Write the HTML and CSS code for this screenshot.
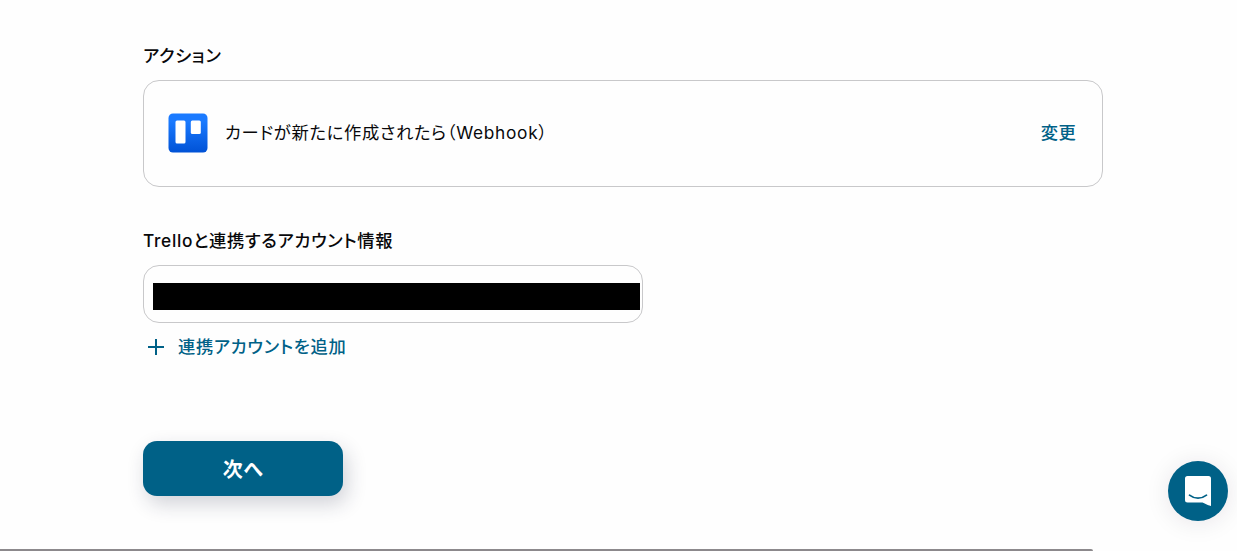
FILE: index.html
```html
<!DOCTYPE html>
<html lang="ja">
<head>
    <meta charset="UTF-8">
    <meta name="viewport" content="width=device-width, initial-scale=1.0">
    <title>アクション設定</title>
    <link rel="stylesheet" href="styles.css">
</head>
<body>
    <main class="content">
        <h2 class="label">アクション</h2>
        <div class="action-card">
            <svg class="app-icon" viewBox="0 0 40 40">
                <defs>
                    <linearGradient id="trello" x1="0" y1="0" x2="0" y2="1">
                        <stop offset="0.2" stop-color="#1a7aff"/>
                        <stop offset="1" stop-color="#0052d6"/>
                    </linearGradient>
                </defs>
                <rect x="0.500" y="0.500" width="39" height="39" rx="4.5" fill="url(#trello)"/>
                <rect x="7.5" y="7.5" width="10" height="23" rx="1.5" fill="#fff"/>
                <rect x="22.8" y="7.5" width="10" height="13.5" rx="1.5" fill="#fff"/>
            </svg>
            <span class="action-name">カードが新たに作成されたら（Webhook）</span>
            <a class="change-link">変更</a>
        </div>

        <h2 class="label">Trelloと連携するアカウント情報</h2>
        <div class="account-select">
            <div class="masked"></div>
        </div>
        <a class="add-account">
            <svg class="plus-icon" viewBox="0 0 16 16">
                <path d="M8 0v16M0 8h16" stroke="currentColor" stroke-width="2"/>
            </svg>
            <span class="add-text">連携アカウントを追加</span>
        </a>

        <button class="next-btn">次へ</button>
    </main>

    <!-- チャットボタン -->
    <div class="chat-launcher">
        <svg class="chat-icon" viewBox="0 0 28 32">
            <path d="M3.500 1h21a2.500 2.500 0 0 1 2.500 2.500V31s-4-1-8.500-3.500h-15A2.500 2.500 0 0 1 1 25V3.500A2.500 2.500 0 0 1 3.500 1z" fill="#fff"/>
            <path d="M5.500 20.200c5 4 12 4 17 0" fill="none" stroke="#006187" stroke-width="1.700" stroke-linecap="round"/>
        </svg>
    </div>
    <div class="bottom-bar"></div>
</body>
</html>
```

FILE: styles.css
```css
* {
    box-sizing: border-box;
}
body {
    margin: 0;
    height: 551px;
    overflow: hidden;
    background-color: #fefefe;
    color: #08080a;
    font-family: Inter, "Noto Sans CJK JP", sans-serif;
    font-size: 17.3px;
    letter-spacing: 0.7px;
    font-feature-settings: "palt";
}
.content {
    display: flex;
    flex-direction: column;
    align-items: flex-start;
    width: 960px;
    margin-left: 143px;
    padding-top: 43px;
}
.label {
    margin: 0 0 11px;
    font-size: 17.3px;
    font-weight: 500;
    line-height: 26px;
}
.action-card {
    display: flex;
    align-items: center;
    width: 960px;
    height: 107px;
    margin-bottom: 41px;
    padding: 0 26px 2px 24px;
    border: 1px solid #c8c8ca;
    border-radius: 16px;
}
.app-icon {
    width: 40px;
    height: 40px;
    margin-right: 17px;
}
.action-name {
    flex: 1;
    padding-bottom: 2px;
}
.change-link {
    padding-bottom: 2px;
    color: #006187;
    font-weight: 500;
    letter-spacing: 0.3px;
}
.account-select {
    width: 500px;
    height: 58px;
    padding: 17px 2px 0 9px;
    border: 1px solid #c8c8ca;
    border-radius: 16px;
}
.masked {
    height: 27px;
    background-color: #000;
}
.add-account {
    display: flex;
    align-items: center;
    gap: 14px;
    height: 26px;
    margin: 11px 0 0 5px;
    color: #006187;
    font-weight: 500;
}
.add-text {
    padding-bottom: 4px;
}
.plus-icon {
    width: 16px;
    height: 16px;
}
.next-btn {
    width: 200px;
    height: 55px;
    margin-top: 81px;
    padding: 0;
    border: 0;
    border-radius: 14px;
    background-color: #006187;
    box-shadow: 4px 8px 20px rgba(30, 35, 65, 0.2);
    color: #fff;
    font-family: inherit;
    font-size: 20px;
    font-weight: 700;
    letter-spacing: 0.5px;
    font-feature-settings: inherit;
}
.chat-launcher {
    position: absolute;
    right: 9px;
    bottom: 30px;
    display: flex;
    align-items: center;
    justify-content: center;
    width: 60px;
    height: 60px;
    border-radius: 50%;
    background-color: #006187;
    box-shadow: 0 2px 24px rgba(40, 20, 50, 0.1);
}
.chat-icon {
    width: 28px;
    height: 32px;
}
.bottom-bar {
    position: absolute;
    left: 0;
    bottom: 0;
    width: 1093px;
    height: 2px;
    border-top-right-radius: 2px;
    background-color: #8c898c;
}
```
